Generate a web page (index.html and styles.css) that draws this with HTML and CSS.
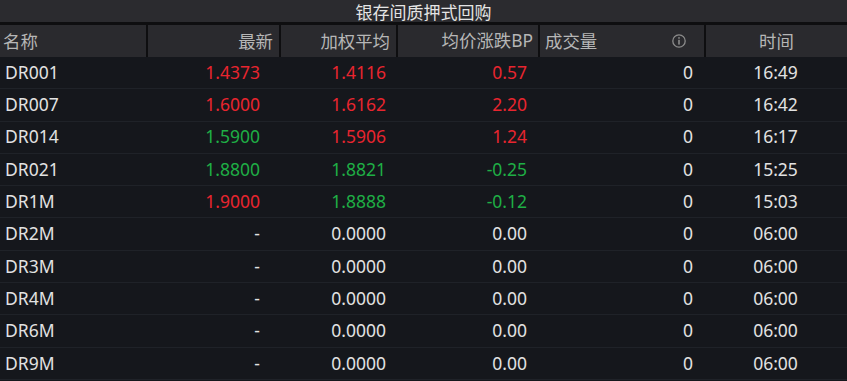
FILE: index.html
```html
<!DOCTYPE html>
<html lang="zh">
<head>
<meta charset="utf-8">
<link rel="stylesheet" href="styles.css">
</head>
<body>
<div class="panel">
  <div class="title"><span>银存间质押式回购</span></div>
  <div class="row head">
    <div class="c c1">名称</div>
    <div class="c c2">最新</div>
    <div class="c c3">加权平均</div>
    <div class="c c4">均价涨跌BP</div>
    <div class="c c5 vol"><span>成交量</span><svg class="info" width="14" height="14" viewBox="0 0 14 14"><circle cx="7" cy="7" r="6.2" fill="none" stroke="#8c8c8c" stroke-width="1.3"/><rect x="6.2" y="5.8" width="1.6" height="4.8" fill="#8c8c8c"/><rect x="6.2" y="3.2" width="1.6" height="1.5" fill="#8c8c8c"/></svg></div>
    <div class="c c6">时间</div>
  </div>
  <div class="row"><div class="c c1">DR001</div><div class="c c2 up">1.4373</div><div class="c c3 up">1.4116</div><div class="c c4 up">0.57</div><div class="c c5">0</div><div class="c c6">16:49</div></div>
  <div class="row"><div class="c c1">DR007</div><div class="c c2 up">1.6000</div><div class="c c3 up">1.6162</div><div class="c c4 up">2.20</div><div class="c c5">0</div><div class="c c6">16:42</div></div>
  <div class="row"><div class="c c1">DR014</div><div class="c c2 down">1.5900</div><div class="c c3 up">1.5906</div><div class="c c4 up">1.24</div><div class="c c5">0</div><div class="c c6">16:17</div></div>
  <div class="row"><div class="c c1">DR021</div><div class="c c2 down">1.8800</div><div class="c c3 down">1.8821</div><div class="c c4 down">-0.25</div><div class="c c5">0</div><div class="c c6">15:25</div></div>
  <div class="row"><div class="c c1">DR1M</div><div class="c c2 up">1.9000</div><div class="c c3 down">1.8888</div><div class="c c4 down">-0.12</div><div class="c c5">0</div><div class="c c6">15:03</div></div>
  <div class="row"><div class="c c1">DR2M</div><div class="c c2">-</div><div class="c c3">0.0000</div><div class="c c4">0.00</div><div class="c c5">0</div><div class="c c6">06:00</div></div>
  <div class="row"><div class="c c1">DR3M</div><div class="c c2">-</div><div class="c c3">0.0000</div><div class="c c4">0.00</div><div class="c c5">0</div><div class="c c6">06:00</div></div>
  <div class="row"><div class="c c1">DR4M</div><div class="c c2">-</div><div class="c c3">0.0000</div><div class="c c4">0.00</div><div class="c c5">0</div><div class="c c6">06:00</div></div>
  <div class="row"><div class="c c1">DR6M</div><div class="c c2">-</div><div class="c c3">0.0000</div><div class="c c4">0.00</div><div class="c c5">0</div><div class="c c6">06:00</div></div>
  <div class="row"><div class="c c1">DR9M</div><div class="c c2">-</div><div class="c c3">0.0000</div><div class="c c4">0.00</div><div class="c c5">0</div><div class="c c6">06:00</div></div>
</div>
</body>
</html>
```

FILE: styles.css
```css
html, body {
  margin: 0;
  padding: 0;
  background: #15171c;
}
body {
  width: 847px;
  height: 381px;
  overflow: hidden;
  font-family: "Noto Sans", "Noto Sans CJK SC", sans-serif;
  font-size: 17.5px;
  color: #e2e2e2;
}
.panel {
  display: flex;
  flex-direction: column;
}
.title {
  height: 22px;
  display: flex;
  align-items: center;
  justify-content: center;
  background: #2b2b2f;
  color: #e4e4e4;
  font-family: "Noto Sans CJK SC", sans-serif;
  font-size: 17px;
  line-height: 1;
  border-bottom: 3px solid #0e0e10;
}
.row {
  display: grid;
  grid-template-columns: 146px 133px 117px 142px 166px 143px;
  height: 32.3px;
  box-sizing: border-box;
  border-bottom: 1px solid #1f2228;
  align-items: center;
}
.row.head {
  height: 32px;
  background: #2a2a2e;
  border-bottom: none;
  align-items: stretch;
  color: #b6b6b6;
  font-family: "Noto Sans CJK SC", sans-serif;
  font-size: 17.4px;
}
.head .c {
  display: flex;
  align-items: center;
}
.head .c + .c {
  border-left: 2px solid #0e0e10;
}
.c {
  box-sizing: border-box;
  white-space: nowrap;
  line-height: 1;
}
.c1 { padding-left: 5px; }
.head .c1 { padding-left: 3px; }
.c2 { text-align: right; padding-right: 19px; }
.c3 { text-align: right; padding-right: 10px; }
.c4 { text-align: right; padding-right: 11px; }
.c5 { text-align: right; padding-right: 11px; }
.c6 { text-align: center; }
.head .c2 { justify-content: flex-end; padding-right: 6px; }
.head .c3 { justify-content: flex-end; padding-right: 6px; }
.head .c4 { justify-content: flex-end; padding-right: 5px; font-family: "Noto Sans", "Noto Sans CJK SC", sans-serif; }
.head .vol { justify-content: space-between; padding-left: 5px; padding-right: 18px; }
.head .c6 { justify-content: center; }
.info { display: block; }
.up { color: #e8252f; }
.down { color: #1fae45; }
```
